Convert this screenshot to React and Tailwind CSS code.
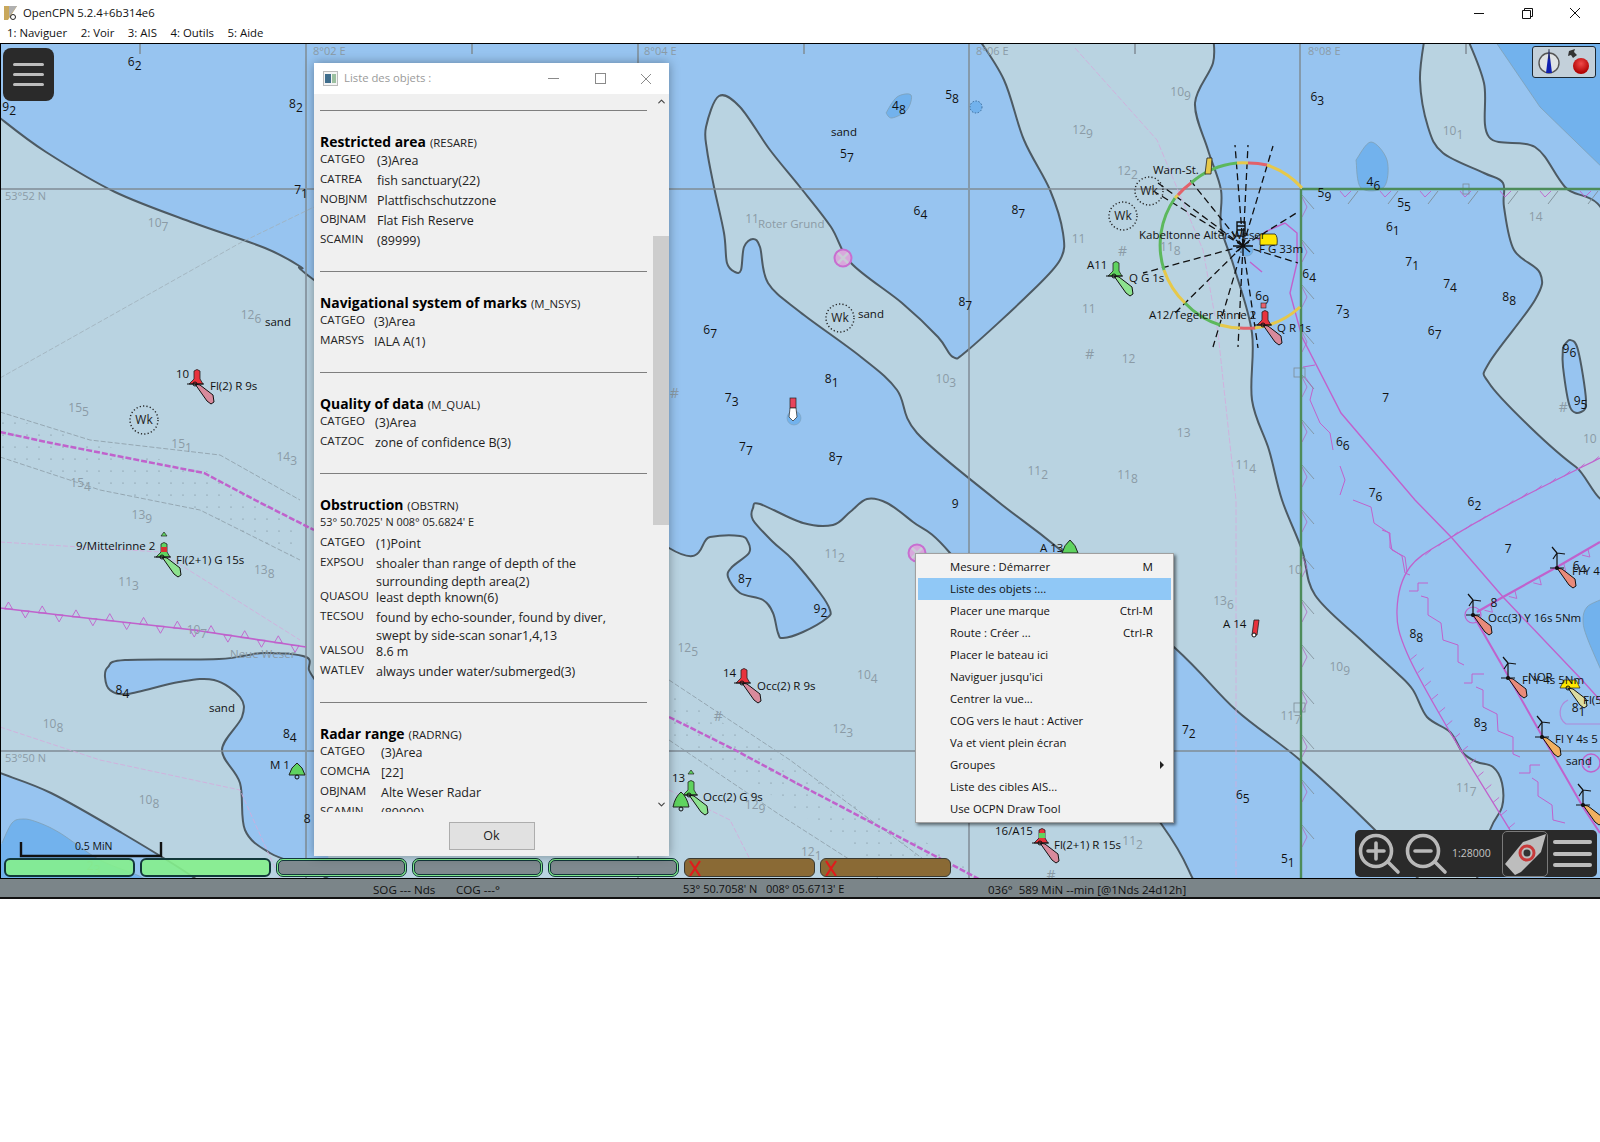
import React from "react";
import { ChevronUp, ChevronDown } from "lucide-react";

const smooth = (p) => {
  let d = `M${p[0][0]} ${p[0][1]}`;
  for (let i = 0; i < p.length - 1; i++) {
    const a = p[i - 1] || p[i], b = p[i], c = p[i + 1], e = p[i + 2] || c;
    const c1x = b[0] + (c[0] - a[0]) / 6, c1y = b[1] + (c[1] - a[1]) / 6;
    const c2x = c[0] - (e[0] - b[0]) / 6, c2y = c[1] - (e[1] - b[1]) / 6;
    d += ` C${c1x.toFixed(1)} ${c1y.toFixed(1)} ${c2x.toFixed(1)} ${c2y.toFixed(1)} ${c[0]} ${c[1]}`;
  }
  return d;
};
const poly = (p) => p.map((q) => q.join(",")).join(" ");

const along = (pts, step) => {
  const out = [];
  let left = step / 2;
  for (let i = 0; i < pts.length - 1; i++) {
    const [x1, y1] = pts[i], [x2, y2] = pts[i + 1];
    const L = Math.hypot(x2 - x1, y2 - y1);
    let t = left;
    while (t < L) {
      out.push({ x: x1 + ((x2 - x1) * t) / L, y: y1 + ((y2 - y1) * t) / L, dx: (x2 - x1) / L, dy: (y2 - y1) / L });
      t += step;
    }
    left = t - L;
  }
  return out;
};

const BLUE = "#97c4f0", SHOAL = "#b9d3e1", MID = "#72b2ed", LINE = "#4d5a63", MAG = "#c062cc", GRAYT = "#8b9ba6";

const shoalB = [[-10,108],[0,118],[46,152],[115,192],[194,223],[265,248],[301,267],[314,280],[480,400],[669,548],[710,537],[740,536],[748,542],[749,553],[732,567],[728,577],[740,593],[763,600],[773,613],[778,633],[783,638],[803,632],[827,618],[830,610],[820,593],[793,560],[773,542],[753,520],[753,508],[760,504],[803,523],[833,525],[850,512],[867,499],[887,503],[913,522],[950,553],[1050,680],[1162,825],[1193,879],[1200,892],[-10,892]];
const shoalC = [[1213,35],[1213,63],[1195,103],[1208,150],[1221,190],[1221,227],[1234,267],[1252,333],[1252,400],[1269,450],[1282,500],[1302,550],[1315,595],[1361,640],[1397,673],[1413,690],[1427,717],[1450,732],[1463,753],[1477,762],[1493,767],[1502,783],[1502,807],[1490,830],[1470,892],[1433,892],[1373,828],[1300,760],[1236,710],[1175,648],[1058,548],[996,500],[917,433],[897,390],[861,357],[800,312],[768,283],[760,247],[753,239],[744,247],[741,270],[735,272],[727,263],[724,233],[714,187],[707,150],[706,127],[719,96],[740,107],[770,150],[800,187],[831,227],[851,263],[902,303],[938,337],[953,357],[968,350],[1030,293],[1060,260],[1063,233],[1050,190],[1024,140],[1004,80],[976,35]];
const shoalD = [[1425,35],[1420,80],[1428,127],[1443,153],[1484,173],[1503,183],[1504,207],[1514,250],[1540,273],[1535,300],[1489,363],[1489,383],[1530,427],[1576,467],[1610,485],[1610,235],[1565,187],[1535,147],[1489,137],[1484,83],[1466,35]];
const bay = [[315,680],[309,670],[306,657],[265,653],[219,659],[125,660],[108,667],[105,677],[110,690],[128,694],[179,682],[214,680],[240,697],[242,717],[222,750],[240,783],[245,830],[270,853],[306,867],[330,880]];
const bayL = [[-10,768],[0,773],[51,793],[122,833],[196,879],[205,892],[-10,892]];
const midL = [[2,843],[12,823],[23,819],[37,822],[60,833],[100,860],[143,878],[150,892],[-10,892],[-10,860]];

const soundings = [
  [132,64,"6","2"],[290,105,"8","2"],[9,108,"9","2"],[295,189,"7","1"],[696,326,"6","7"],[717,393,"7","3"],[731,441,"7","7"],[815,374,"8","1"],[819,451,"8","7"],[730,570,"8","7"],[804,600,"9","2"],[120,679,"8","4"],[284,722,"8","4"],[301,806,"8",""],[933,96,"5","8"],[881,107,"4","8"],[830,154,"5","7"],[902,210,"6","4"],[998,209,"8","7"],[946,299,"8","7"],[936,497,"9",""],[1291,98,"6","3"],[1346,181,"4","6"],[1298,192,"5","9"],[1376,202,"5","5"],[1365,225,"6","1"],[1384,260,"7","1"],[1421,281,"7","4"],[1479,294,"8","8"],[1316,307,"7","3"],[1406,327,"6","7"],[1283,271,"6","4"],[1237,293,"6","9"],[1358,393,"7",""],[1538,345,"9","6"],[1549,396,"9","5"],[1316,436,"6","6"],[1348,486,"7","6"],[1445,495,"6","2"],[1478,541,"7",""],[1388,624,"8","8"],[1451,711,"8","3"],[1165,718,"7","2"],[1218,782,"6","5"],[1262,845,"5","1"],[1464,594,"8",""],[1547,697,"8","1"],[1548,558,"6","4"],
];
const graySoundings = [
  [155,221,"10","7"],[246,312,"12","6"],[77,403,"15","5"],[178,438,"15","1"],[281,451,"14","3"],[79,476,"15","4"],[139,508,"13","9"],[259,562,"13","8"],[126,573,"11","3"],[193,620,"10","7"],[52,712,"10","8"],[146,787,"10","8"],[92,852,"2","3"],[674,638,"12","5"],[818,546,"11","2"],[850,664,"10","4"],[826,717,"12","3"],[740,792,"12","9"],[1110,827,"11","2"],[795,838,"12","1"],[1157,93,"10","9"],[1061,130,"12","9"],[1105,171,"12","2"],[1057,237,"11",""],[1147,245,"11","8"],[1067,306,"11",""],[1106,355,"12",""],[927,374,"10","3"],[1017,465,"11","2"],[1105,468,"11","8"],[1221,459,"11","4"],[1160,427,"13",""],[1424,131,"10","1"],[1505,216,"14",""],[1199,592,"13","6"],[1313,657,"10","9"],[1437,775,"11","7"],[737,218,"11",""],[1269,562,"10",""],[1265,705,"11","7"],[1558,433,"10",""],
];
const K = 1600 / 1568;

const labels = [
  [176,374,"10"],[210,386,"Fl(2) R 9s"],[76,546,"9/Mittelrinne 2"],[176,560,"Fl(2+1) G 15s"],[270,765,"M 1"],[723,673,"14"],[757,686,"Occ(2) R 9s"],[672,778,"13"],[703,797,"Occ(2) G 9s"],[1040,548,"A 13"],[995,831,"16/A15"],[1054,845,"Fl(2+1) R 15s"],[1223,624,"A 14"],[1087,265,"A11"],[1129,278,"Q G 1s"],[1149,315,"A12/Tegeler Rinne 2"],[1277,328,"Q R 1s"],[1153,170,"Warn-St."],[1139,235,"Kabeltonne Alter Weser"],[1259,249,"F G 33m"],[1488,618,"Occ(3) Y 16s 5Nm"],[1522,680,"Fl Y 4s 5Nm"],[1528,677,"NOR"],[1583,700,"Fl(5"],[1555,739,"Fl Y 4s 5"],[1572,571,"Fl Y 4"],[831,132,"sand"],[265,322,"sand"],[858,314,"sand"],[209,708,"sand"],[1566,761,"sand"],
];

function Flare({ x, y, fill }) {
  return <path transform={`translate(${x} ${y})`} d="M0 0 L5 1 L18 11 L19 18 L16 20 L12 17 Z" fill={fill} stroke="#111" strokeWidth="1" />;
}
function Buoy({ x, y, color = "#e8323c", flare = "#d88a9c", band, top }) {
  return (
    <g>
      <Flare x={x} y={y} fill={flare} />
      <g transform={`translate(${x} ${y})`}>
        <path d="M-6 0 L-1 -5 L-1 -13 Q2 -16 5 -13 L5 -5 L8 0 Z" fill={color} stroke="#222" strokeWidth="0.8" />
        {band && <rect x="-1" y="-10" width="6" height="5" fill={band} />}
        {top && <path d="M-1 -21 L2 -25 L5 -21 Z" fill={color} stroke="#222" strokeWidth="0.7" />}
        <line x1="-8" y1="0" x2="9" y2="0" stroke="#111" strokeWidth="1" />
        <circle r="2" fill="none" stroke="#111" strokeWidth="1" />
      </g>
    </g>
  );
}
function Turbine({ x, y, flare }) {
  return (
    <g>
      <Flare x={x} y={y} fill={flare} />
      <g transform={`translate(${x} ${y})`} stroke="#111" strokeWidth="1.2" fill="none">
        <path d="M0 0 V-15 M0 -15 L-5 -21 M0 -15 L8 -14 M0 -15 L-4 -9 M-7 0 H7" />
        <circle r="1.5" fill="#111" />
      </g>
    </g>
  );
}
function Wreck({ x, y }) {
  return (
    <g>
      <circle cx={x} cy={y} r="14" fill="none" stroke="#222" strokeWidth="1.4" strokeDasharray="1.2 2.2" />
      <text x={x} y={y + 4} textAnchor="middle" fontSize="12" fill="#222">Wk</text>
    </g>
  );
}
function Restricted({ x, y }) {
  return (
    <g stroke="#c86ed0" fill="#d8a8dc">
      <circle cx={x} cy={y} r="8.5" strokeWidth="2" />
      <path d={`M${x - 5} ${y - 5} L${x + 5} ${y + 5} M${x + 5} ${y - 5} L${x - 5} ${y + 5}`} stroke="#c9ccd6" strokeWidth="2.5" />
    </g>
  );
}

function ChartArt() {
  const C = [1243, 246], R = 82;
  const arcs = [
    ["#5cb85c", [1191,183], [1237,163]],
    ["#e6c84a", [1237,163], [1248,163]],
    ["#e2626a", [1248,163], [1267,165]],
    ["#e6c84a", [1267,165], [1302,188]],
    ["#e6c84a", [1300,307], [1255,328]],
    ["#e2626a", [1255,328], [1240,328]],
    ["#e6c84a", [1240,328], [1220,325]],
    ["#5cb85c", [1220,325], [1185,303]],
    ["#e6c84a", [1185,303], [1164,270]],
    ["#5cb85c", [1164,270], [1175,198]],
    ["#e6c84a", [1175,198], [1178,195]],
    ["#e2626a", [1178,195], [1191,183]],
  ];
  const rays = [[1235,145],[1248,145],[1273,146],[1158,183],[1155,192],[1190,180],[1298,212],[1298,263],[1143,273],[1175,313],[1213,347],[1238,347],[1258,348]];
  const zig = along([[0,608],[77,617],[194,630],[306,647]], 17);
  const stairs = [
    [[1382,530],[1390,533],[1390,548],[1402,556],[1405,573],[1410,575]],
    [[1409,591],[1418,591],[1418,583],[1428,583]],
    [[1421,596],[1428,598],[1428,615],[1441,623],[1443,640],[1458,645],[1458,662],[1464,665]],
    [[1464,683],[1472,683],[1472,674],[1484,674]],
    [[1476,687],[1483,690],[1483,707],[1497,714],[1498,731],[1513,737],[1513,754],[1520,757]],
    [[1519,773],[1530,773],[1530,765],[1540,765]],
    [[1532,778],[1538,782],[1538,796],[1552,805],[1553,820],[1565,823]],
    [[1303,367],[1315,365]],
    [[1305,377],[1313,388],[1310,400],[1320,423],[1330,433],[1333,450]],
    [[1353,500],[1371,507],[1374,523],[1389,533],[1392,550],[1405,557],[1407,572]],
    [[1340,466],[1345,480],[1340,495]],
  ];
  const bigCurve = [[1600,458],[1517,500],[1450,538],[1410,567],[1397,610],[1407,653],[1447,727],[1510,830]];
  const bigTicks = along([[1600,458],[1517,500],[1450,538],[1415,562]], 16).concat(along([[1407,653],[1447,727],[1510,830]], 15));
  const strongTicks = along([[1600,542],[1557,567],[1503,597],[1477,612]], 28);
  return (
    <svg className="absolute inset-0 block h-full w-full" viewBox="0 43 1600 836" fontFamily="'Open Sans', sans-serif">
      <defs>
        <pattern id="dots" width="12" height="12" patternUnits="userSpaceOnUse">
          <circle cx="3" cy="3" r="0.6" fill="#6d7d88" />
        </pattern>
      </defs>
      <rect x="0" y="43" width="1600" height="836" fill={BLUE} />
      <path d="M1491 35 L1540 107 L1610 175 V35 Z" fill={MID} stroke="#7f9fb5" strokeWidth="0.8" />
      <path d={smooth(shoalB)} fill={SHOAL} stroke={LINE} strokeWidth="2" />
      <path d={smooth(shoalC)} fill={SHOAL} stroke={LINE} strokeWidth="2" />
      <path d={smooth(shoalD)} fill={SHOAL} stroke={LINE} strokeWidth="2" />
      <path d={smooth(bay)} fill={BLUE} stroke={LINE} strokeWidth="2" />
      <path d={smooth(bayL)} fill={BLUE} stroke={LINE} strokeWidth="2" />
      <path d={smooth(midL)} fill={MID} stroke="#7f9fb5" strokeWidth="0.8" />
      <path d={smooth([[1600,600],[1587,607],[1583,620],[1588,640],[1610,690]])} fill={MID} stroke="#7f9fb5" strokeWidth="0.8" />
      <path d={smooth([[886,113],[897,97],[911,95],[907,110],[892,118],[886,113]])} fill={MID} stroke="#7f9fb5" strokeWidth="0.8" />
      <path d={smooth([[1356,160],[1371,142],[1387,160],[1384,187],[1361,188],[1356,160]])} fill={MID} stroke="#7f9fb5" strokeWidth="0.8" />
      <path d={smooth([[1563,347],[1570,340],[1578,350],[1586,400],[1581,412],[1570,407],[1563,367],[1563,347]])} fill={BLUE} stroke={LINE} strokeWidth="2" />
      <circle cx="976" cy="107" r="6" fill={MID} stroke="#3a6c9c" strokeWidth="1" strokeDasharray="1.5 1.5" />

      <polygon points={poly([[0,415],[100,445],[205,470],[300,525],[300,565],[200,510],[100,490],[0,455]])} fill="url(#dots)" />
      <polygon points={poly([[669,690],[800,770],[990,879],[900,879],[780,800],[669,735]])} fill="url(#dots)" />

      <g stroke="#808c95" strokeWidth="2" opacity="0.75">
        <line x1="306" y1="43" x2="306" y2="879" />
        <line x1="638" y1="43" x2="638" y2="879" />
        <line x1="969" y1="43" x2="969" y2="879" />
        <line x1="1300" y1="43" x2="1300" y2="189" />
        <line x1="0" y1="189" x2="1300" y2="189" />
        <line x1="0" y1="751" x2="1600" y2="751" />
        {[140,472,804,1135,1466].map((x) => <line key={x} x1={x} y1="43" x2={x} y2="54" />)}
      </g>
      <g fill={GRAYT} fontSize="11">
        <text x="313" y="55">8°02 E</text>
        <text x="644" y="55">8°04 E</text>
        <text x="976" y="55">8°06 E</text>
        <text x="1308" y="55">8°08 E</text>
        <text x="5" y="200">53°52 N</text>
        <text x="5" y="762">53°50 N</text>
      </g>

      <g fill="none" stroke="#9fb0ba" strokeWidth="0.8">
        <polyline points={poly([[0,378],[240,243],[314,207]])} strokeDasharray="5 2" />
        <polyline points={poly([[0,412],[90,440],[220,455],[300,500]])} strokeDasharray="5 2" stroke="#8c9ca6" />
        <polyline points={poly([[0,457],[100,490],[200,510],[300,560]])} strokeDasharray="5 2" stroke="#8c9ca6" />
        <polyline points={poly([[669,680],[790,760],[950,879]])} strokeDasharray="5 2" stroke="#8c9ca6" />
        <polyline points={poly([[669,740],[780,815],[880,879]])} strokeDasharray="5 2" stroke="#8c9ca6" />
        <polyline points={poly([[0,542],[160,552],[300,640]])} strokeDasharray="5 2" stroke="#d6a9dc" />
        <polyline points={poly([[0,727],[100,760],[240,790],[280,879]])} strokeDasharray="5 2" stroke="#d6a9dc" />
        <polyline points={poly([[669,790],[730,820],[760,879]])} strokeDasharray="5 2" stroke="#d6a9dc" />
        <polyline points={poly([[1075,48],[1157,140],[1203,250],[1218,333],[1236,500],[1236,879]])} strokeDasharray="6 2" stroke="#d6a9dc" />
      </g>

      <polyline points={poly([[0,432],[51,443],[204,473],[255,500],[314,530]])} fill="none" stroke={MAG} strokeWidth="2.5" strokeDasharray="6 2" />
      <polyline points={poly([[669,717],[735,750],[800,785],[979,879]])} fill="none" stroke={MAG} strokeWidth="2.5" strokeDasharray="6 2" />
      <polyline points={poly([[0,608],[77,617],[194,630],[306,647]])} fill="none" stroke={MAG} strokeWidth="1.6" />
      {zig.map((p, i) => (
        <polygon key={i} points={i % 2 ? `${p.x - 4},${p.y} ${p.x + 4},${p.y} ${p.x},${p.y + 7}` : `${p.x - 4},${p.y} ${p.x + 4},${p.y} ${p.x},${p.y - 7}`} fill="none" stroke={MAG} strokeWidth="0.9" />
      ))}

      <g fill="none" stroke={MAG}>
        <polyline points={poly([[1285,223],[1297,233],[1297,263],[1290,293],[1302,337],[1341,413],[1415,500],[1452,538],[1503,597],[1582,680],[1600,700]])} strokeWidth="1.4" />
        <path d="M1285 223 L1265 232 L1258 240 M1250 262 L1262 272" strokeWidth="1.4" />
        <polyline points={poly([[1600,542],[1557,567],[1503,597],[1477,612]])} strokeWidth="2.2" />
        <polyline points={poly([[1473,615],[1503,667],[1537,727],[1583,807],[1600,833]])} strokeWidth="2" />
        <path d={smooth(bigCurve)} strokeWidth="1.3" />
        {stairs.map((s, i) => <polyline key={i} points={poly(s)} strokeWidth="1" />)}
        {bigTicks.map((p, i) => <line key={i} x1={p.x} y1={p.y} x2={p.x + 6} y2={p.y - 5} strokeWidth="0.9" />)}
        {strongTicks.map((p, i) => <path key={i} d={`M${p.x} ${p.y} l2 8 l-8 -2`} strokeWidth="0.9" />)}
        <circle cx="1473" cy="615" r="8" strokeWidth="1.2" />
        <path d="M1568 700 a14 14 0 0 0 -2 24 h34" strokeWidth="1.2" opacity="0.6" />
        <circle cx="1591" cy="763" r="9" strokeWidth="1.4" />
      </g>
      <text x="1587" y="768" fontSize="14" fill={MAG} fontWeight="bold">!</text>

      {Array.from({ length: 15 }, (_, i) => 195 + i * 45).map((y) => (
        <g key={y} fill="none" strokeWidth="0.8">
          <path d={`M1302 ${y} l12 14`} stroke="#7d8c94" />
          <path d={`M1302 ${y + 2} l5 10 l-5 10`} stroke="#b06cc0" />
        </g>
      ))}
      {Array.from({ length: 7 }, (_, i) => 1340 + i * 40).map((x) => (
        <g key={x} fill="none" strokeWidth="0.9">
          <path d={`M${x} 191 l5 6 l6 -6`} stroke={MAG} />
          <path d={`M${x + 18} 191 l-10 13`} stroke="#7d8c94" />
        </g>
      ))}
      <rect x="1463" y="184" width="6" height="10" fill="none" stroke="#7d8c94" strokeWidth="0.8" />
      <rect x="1294" y="368" width="11" height="9" fill="none" stroke="#7d8c94" strokeWidth="0.8" />
      <rect x="1294" y="703" width="11" height="9" fill="none" stroke="#7d8c94" strokeWidth="0.8" />
      <polyline points="1302,189 1600,189" fill="none" stroke="#4d8c5a" strokeWidth="2.4" />
      <polyline points="1301,189 1301,879" fill="none" stroke="#4d8c5a" strokeWidth="2.4" />

      <g stroke="#111" strokeWidth="1.3" strokeDasharray="7 4">
        {rays.map((r, i) => <line key={i} x1={C[0]} y1={C[1]} x2={r[0]} y2={r[1]} />)}
      </g>
      {arcs.map(([col, a, b], i) => (
        <path key={i} d={`M${a[0]} ${a[1]} A${R} ${R} 0 0 1 ${b[0]} ${b[1]}`} fill="none" stroke={col} strokeWidth="3" />
      ))}
      <circle cx="1247" cy="250" r="6" fill={MID} stroke="#7f9fb5" strokeWidth="0.6" />
      <path d="M1237 222 h8 v14 h-8 z M1237 226 h8 M1237 230 h8 M1233 246 h20 M1243 236 v20 M1236 240 l14 12 M1250 240 l-14 12" fill="none" stroke="#111" strokeWidth="1.4" />
      <path d="M1260 245 V234 H1275 Q1278 236 1277 245 Z" fill="#ffe600" stroke="#222" strokeWidth="0.8" />

      {soundings.map(([x, y, a, b], i) => (
        <text key={i} x={x * K} y={(y * K) + 1} textAnchor="middle" fontSize="12" fill="#111">{a}{b && <tspan dy="4">{b}</tspan>}</text>
      ))}
      {graySoundings.map(([x, y, a, b], i) => (
        <text key={i} x={x * K} y={(y * K) + 1} textAnchor="middle" fontSize="12" fill={GRAYT}>{a}{b && <tspan dy="4">{b}</tspan>}</text>
      ))}
      {[[661,386],[1100,247],[1068,348],[1532,400],[704,703],[1030,858]].map(([x, y], i) => (
        <text key={i} x={x * K} y={y * K + 4} textAnchor="middle" fontSize="14" fill={GRAYT}>#</text>
      ))}
      <text x="758" y="228" fontSize="11.5" fill={GRAYT}>Roter Grund</text>
      <text x="230" y="658" fontSize="11.5" fill={GRAYT}>Neue Weser</text>

      <Buoy x={195} y={384} />
      <Buoy x={162} y={557} color="#5fd35f" flare="#8de28f" band="#d83030" top />
      <Buoy x={742} y={683} />
      <Buoy x={689} y={795} color="#5fd35f" flare="#8de28f" top />
      <Buoy x={1040} y={843} color="#e8323c" band="#5fd35f" />
      <Buoy x={1114} y={276} color="#5fd35f" flare="#8de28f" />
      <Buoy x={1263} y={325} />
      <path d="M1205 174 L1207 158 L1212 158 L1211 174 Z" fill="#e6c84a" stroke="#222" strokeWidth="0.8" />
      <path d="M1252 635 L1254 620 H1259 L1257 635 Z" fill="#e8323c" stroke="#222" strokeWidth="0.8" />
      <circle cx="1254" cy="635" r="2" fill="#fff" stroke="#111" />
      <path d="M289 775 Q291 767 297 763 Q303 767 305 775 Z" fill="#5fd35f" stroke="#222" strokeWidth="1" />
      <circle cx="297" cy="777" r="2" fill="none" stroke="#111" />
      <path d="M673 807 Q675 797 681 792 Q687 797 689 807 Z" fill="#5fd35f" stroke="#222" strokeWidth="1" />
      <circle cx="681" cy="809" r="2" fill="none" stroke="#111" />
      <path d="M1062 553 Q1064 545 1070 540 Q1076 545 1078 553 Z" fill="#5fd35f" stroke="#222" strokeWidth="1" />
      <circle cx="794" cy="418" r="7" fill={MID} stroke="#7f9fb5" strokeWidth="0.6" />
      <rect x="790" y="398" width="6" height="10" fill="#e8445c" stroke="#222" strokeWidth="0.7" />
      <path d="M790 408 h6 l1 9 l-4 4 l-4 -4 z" fill="#fff" stroke="#222" strokeWidth="0.7" />

      <Turbine x={1473} y={615} flare="#e98a7a" />
      <Turbine x={1508} y={678} flare="#e98a7a" />
      <Turbine x={1542} y={737} flare="#f0b060" />
      <Turbine x={1583} y={805} flare="#f0b060" />
      <Turbine x={1557} y={568} flare="#e98a7a" />
      <Flare x={1568} y={688} fill="#dcdca0" />
      <path d="M1560 688 L1564 680 H1576 L1580 688 Z" fill="#ffe600" stroke="#222" strokeWidth="0.7" />
      <circle cx="1568" cy="688" r="2" fill="none" stroke="#111" />
      <rect x="1261" y="303" width="5" height="5" fill="#e8606c" stroke="#222" strokeWidth="0.6" />

      <Wreck x={144} y={420} />
      <Wreck x={1149} y={191} />
      <Wreck x={1123} y={216} />
      <Wreck x={840} y={318} />
      <Restricted x={843} y={258} />
      <Restricted x={917} y={553} />

      {labels.map(([x, y, t], i) => (
        <text key={i} x={x} y={y + 4} fontSize="11.5" fill="#111">{t}</text>
      ))}

      <path d="M21 842 V856 H161 V842" fill="none" stroke="#111" strokeWidth="2.4" />
      <text x="75" y="850" fontSize="10.5" fill="#111">0.5 MiN</text>

      <rect x="0.5" y="43.5" width="1600" height="835" fill="none" stroke="#000" strokeWidth="1" />
    </svg>
  );
}

function Row({ label, w, children }) {
  return (
    <div className="flex min-h-[20px] items-start">
      <div className={`${w} shrink-0 leading-[18px]`}>{label}</div>
      <div className="mt-[2px] mb-[-4px] text-[12.5px] leading-[18px]">{children}</div>
    </div>
  );
}

function Section({ title, code, sub, children }) {
  return (
    <div className="mb-[21px]">
      <div className="h-px w-[327px] bg-[#7f7f7f]" />
      <div className="mt-[22px] flex h-[17px] items-baseline leading-[17px]">
        <span className="text-[13.9px] font-bold text-black">{title}</span>
        <span className="ml-[4px] text-[11.4px]">{code}</span>
      </div>
      {sub && <div className="mb-[2px] h-[18px] text-[10.9px] leading-[18px]">{sub}</div>}
      {children}
    </div>
  );
}

function ObjectDialog() {
  return (
    <div className="absolute left-[314px] top-[20px] flex h-[793px] w-[355px] flex-col bg-[#f0f0f0] shadow-[0_0_10px_rgba(0,0,0,0.35)]">
      <div className="flex h-[31px] items-center bg-white pl-[9px]">
        <svg width="15" height="15" viewBox="0 0 15 15">
          <rect x="0.5" y="0.5" width="14" height="14" fill="#f4f4f4" stroke="#bbb" />
          <rect x="2" y="3" width="6" height="9" fill="#3f6d8c" />
          <rect x="9" y="3" width="4" height="9" fill="#9cc0a0" />
        </svg>
        <span className="ml-[6px] text-[11.3px] text-[#9a9a9a]">Liste des objets :</span>
        <div className="ml-auto flex items-center text-[#8a8a8a]">
          <div className="mr-[36px] h-px w-[11px] bg-[#8a8a8a]" />
          <div className="mr-[34px] h-[11px] w-[11px] border border-[#8a8a8a]" />
          <svg width="12" height="12" viewBox="0 0 12 12" className="mr-[17px]"><path d="M1 1 L11 11 M11 1 L1 11" stroke="#8a8a8a" strokeWidth="1" /></svg>
        </div>
      </div>
      <div className="flex h-[718px] overflow-hidden">
        <div className="w-[339px] overflow-hidden pl-[6px] pt-[16px] text-[#222]">
          <Section title="Restricted area" code="(RESARE)">
            <Row label="CATGEO" w="w-[57px]">(3)Area</Row>
            <Row label="CATREA" w="w-[57px]">fish sanctuary(22)</Row>
            <Row label="NOBJNM" w="w-[57px]">Plattfischschutzzone</Row>
            <Row label="OBJNAM" w="w-[57px]">Flat Fish Reserve</Row>
            <Row label="SCAMIN" w="w-[57px]">(89999)</Row>
          </Section>
          <Section title="Navigational system of marks" code="(M_NSYS)">
            <Row label="CATGEO" w="w-[54px]">(3)Area</Row>
            <Row label="MARSYS" w="w-[54px]">IALA A(1)</Row>
          </Section>
          <Section title="Quality of data" code="(M_QUAL)">
            <Row label="CATGEO" w="w-[55px]">(3)Area</Row>
            <Row label="CATZOC" w="w-[55px]">zone of confidence B(3)</Row>
          </Section>
          <Section title="Obstruction" code="(OBSTRN)" sub="53° 50.7025' N 008° 05.6824' E">
            <Row label="CATGEO" w="w-[56px]">(1)Point</Row>
            <Row label="EXPSOU" w="w-[56px]">shoaler than range of depth of the<br />surrounding depth area(2)</Row>
            <Row label="QUASOU" w="w-[56px]">least depth known(6)</Row>
            <Row label="TECSOU" w="w-[56px]">found by echo-sounder, found by diver,<br />swept by side-scan sonar1,4,13</Row>
            <Row label="VALSOU" w="w-[56px]">8.6 m</Row>
            <Row label="WATLEV" w="w-[56px]">always under water/submerged(3)</Row>
          </Section>
          <Section title="Radar range" code="(RADRNG)">
            <Row label="CATGEO" w="w-[61px]">(3)Area</Row>
            <Row label="COMCHA" w="w-[61px]">[22]</Row>
            <Row label="OBJNAM" w="w-[61px]">Alte Weser Radar</Row>
            <Row label="SCAMIN" w="w-[61px]">(89999)</Row>
          </Section>
        </div>
        <div className="flex w-[16px] flex-col items-center justify-between py-[2px]">
          <ChevronUp size={11} strokeWidth={2.5} className="text-[#444]" />
          <ChevronDown size={11} strokeWidth={2.5} className="text-[#444]" />
        </div>
      </div>
      <div className="flex flex-1 justify-center pt-[10px]">
        <button className="h-[28px] w-[86px] border border-[#adadad] bg-[#e1e1e1] text-[12.5px] text-[#222]">Ok</button>
      </div>
      <div className="absolute right-0 top-[173px] h-[289px] w-[16px] bg-[#cdcdcd]" />
    </div>
  );
}

const menuItems = [
  ["Mesure : Démarrer", "M"], ["Liste des objets :..."], ["Placer une marque", "Ctrl-M"], ["Route : Créer ...", "Ctrl-R"], ["Placer le bateau ici"], ["Naviguer jusqu'ici"], ["Centrer la vue..."], ["COG vers le haut : Activer"], ["Va et vient plein écran"], ["Groupes", "", true], ["Liste des cibles AIS..."], ["Use OCPN Draw Tool"],
];

function ContextMenu() {
  return (
    <div className="absolute left-[915px] top-[510px] h-[270px] w-[259px] border border-[#a0a0a0] bg-[#f2f2f2] px-[2px] pt-[2px] text-[11.3px] text-[#111] shadow-[2px_2px_3px_rgba(0,0,0,0.5)]">
      {menuItems.map(([t, s, sub], i) => (
        <div key={t} className={`flex h-[22px] items-center pl-[32px] pr-[18px] ${i === 1 ? "bg-[#90c8f6]" : ""}`}>
          <span>{t}</span>
          {s && <span className="ml-auto text-[11.6px]">{s}</span>}
          {sub && <span className="ml-auto mr-[-11px] h-0 w-0 border-y-[4px] border-l-[4px] border-y-transparent border-l-[#222]" />}
        </div>
      ))}
    </div>
  );
}

const pianoGreen = "h-[19px] w-[131px] rounded-[6px] border-2 border-[#12383a] bg-[#85f08c]/90";
const pianoGrey = "h-[19px] w-[131px] rounded-[7px] border border-[#12383a] bg-[#7fe88a] p-[1px]";

function Piano() {
  return (
    <div className="absolute left-[4px] top-[815px] flex gap-[5px]">
      <div className={pianoGreen} />
      <div className={pianoGreen} />
      {[0, 1, 2].map((i) => (
        <div key={i} className={pianoGrey}>
          <div className="h-full rounded-[5px] border border-[#12383a] bg-[#7f8a8f]" />
        </div>
      ))}
      {[0, 1].map((i) => (
        <div key={i} className="relative h-[19px] w-[131px] overflow-hidden rounded-[6px] border border-[#3a3a32] bg-[#8a6a35]">
          <svg width="14" height="17" viewBox="0 0 14 17" className="absolute left-[3px] top-[1px]"><path d="M2 1 L12 16 M12 1 L2 16" stroke="#e01c1c" strokeWidth="2.2" /></svg>
        </div>
      ))}
    </div>
  );
}

function Zoom({ minus }) {
  return (
    <svg width="46" height="46" viewBox="0 0 46 46" fill="none" stroke="#b9b9b9" strokeLinecap="round">
      <circle cx="19" cy="20" r="15.5" strokeWidth="3.6" />
      <path d="M31 31 L41 41" strokeWidth="3.6" />
      <path d={minus ? "M11 20 H27" : "M11 20 H27 M19 12 V28"} strokeWidth="3.6" />
    </svg>
  );
}

function Controls() {
  return (
    <div className="absolute left-[1355px] top-[787px] flex h-[47px] w-[242px] items-center rounded-[5px] bg-[#2a2a2a]">
      <div className="ml-[2px]"><Zoom /></div>
      <div className="ml-[1px]"><Zoom minus /></div>
      <span className="ml-[2px] w-[44px] text-[10.5px] text-[#c4c4c4]">1:28000</span>
      <div className="ml-[6px] h-[46px] w-[46px] shrink-0 rounded-[5px] border border-[#7a7a7a]">
        <svg width="44" height="44" viewBox="0 0 44 44">
          <path d="M43 2 L38 20 L18 40 L12 43 L2 32 L20 10 Z" fill="#bdbdbd" />
          <circle cx="24" cy="21" r="7" fill="#bdbdbd" stroke="#c83a3a" strokeWidth="3" />
          <circle cx="24" cy="21" r="3.5" fill="#333" />
        </svg>
      </div>
      <div className="ml-[5px] flex flex-col gap-[7.5px]">
        <div className="h-[4px] w-[39px] rounded-full bg-[#bdbdbd]" />
        <div className="h-[4px] w-[39px] rounded-full bg-[#bdbdbd]" />
        <div className="h-[4px] w-[39px] rounded-full bg-[#bdbdbd]" />
      </div>
    </div>
  );
}

function Compass() {
  return (
    <div className="absolute left-[1532px] top-[3px] flex h-[32px] w-[64px] items-center rounded-[3px] border border-[#1c2833] bg-[#c3d0da]">
      <svg width="62" height="30" viewBox="0 0 62 30">
        <defs>
          <radialGradient id="rb" cx="50%" cy="35%" r="60%">
            <stop offset="0%" stopColor="#f04a4a" />
            <stop offset="100%" stopColor="#b00000" />
          </radialGradient>
        </defs>
        <circle cx="16" cy="16" r="10" fill="#dfe3e5" stroke="#555" strokeWidth="1.4" />
        <path d="M16 2 L19 26 H13 Z" fill="#1020b0" />
        <line x1="16" y1="2" x2="16" y2="12" stroke="#333" strokeWidth="0.8" />
        <circle cx="48" cy="19" r="8" fill="url(#rb)" />
        <path d="M36 4 L42 2 L41 5 L44 8 L40 11 L38 8 L35 9 Z" fill="#333" />
      </svg>
    </div>
  );
}

export default function App() {
  return (
    <div className="h-[1142px] w-[1600px] overflow-hidden bg-white font-['Open_Sans',sans-serif] text-[11.6px] text-[#111]">
      <div className="flex h-[26px] items-center pl-[3px]">
        <svg width="15" height="16" viewBox="0 0 15 16">
          <path d="M1 1 H14 L5 15 H1 Z" fill="#c9a85c" />
          <path d="M6 1 H14 L6 12 Z" fill="#b0b0b0" />
          <circle cx="10" cy="12" r="2.5" fill="none" stroke="#222" strokeWidth="1" />
        </svg>
        <span className="ml-[5px] text-[11.3px]">OpenCPN 5.2.4+6b314e6</span>
        <div className="ml-auto flex items-center">
          <div className="mr-[38px] h-px w-[10px] bg-[#111]" />
          <svg width="11" height="11" viewBox="0 0 11 11" className="mr-[36px]"><path d="M2.5 2.5 V0.5 H10.5 V8.5 H8.5 M0.5 2.5 H8.5 V10.5 H0.5 Z" fill="none" stroke="#111" /></svg>
          <svg width="12" height="12" viewBox="0 0 12 12" className="mr-[19px]"><path d="M1 1 L11 11 M11 1 L1 11" stroke="#111" strokeWidth="1" /></svg>
        </div>
      </div>
      <div className="flex h-[17px] items-center gap-[13.5px] pb-[3px] pl-[7px] text-[11.4px]">
        <span>1: Naviguer</span><span>2: Voir</span><span>3: AIS</span><span>4: Outils</span><span>5: Aide</span>
      </div>
      <div className="relative h-[836px] w-full overflow-hidden">
        <ChartArt />
        <div className="absolute left-[3px] top-[5px] flex h-[53px] w-[51px] flex-col items-center justify-center gap-[7px] rounded-[8px] bg-[#2a2a2a]">
          <div className="h-[3px] w-[31px] rounded-full bg-[#bdbdbd]" />
          <div className="h-[3px] w-[31px] rounded-full bg-[#bdbdbd]" />
          <div className="h-[3px] w-[31px] rounded-full bg-[#bdbdbd]" />
        </div>
        <Compass />
        <Piano />
        <ObjectDialog />
        <ContextMenu />
        <Controls />
      </div>
      <div className="flex h-[20px] items-center border-b-2 border-[#111] bg-[#7b8589] pt-[3px] text-[11.6px] text-[#111]">
        <span className="ml-[373px] w-[83px]">SOG --- Nds</span>
        <span className="w-[227px]">COG ---°</span>
        <span className="w-[305px] text-[11px]">53° 50.7058' N &nbsp; 008° 05.6713' E</span>
        <span className="text-[11.5px]">036° &nbsp;589 MiN --min [@1Nds 24d12h]</span>
      </div>
    </div>
  );
}
